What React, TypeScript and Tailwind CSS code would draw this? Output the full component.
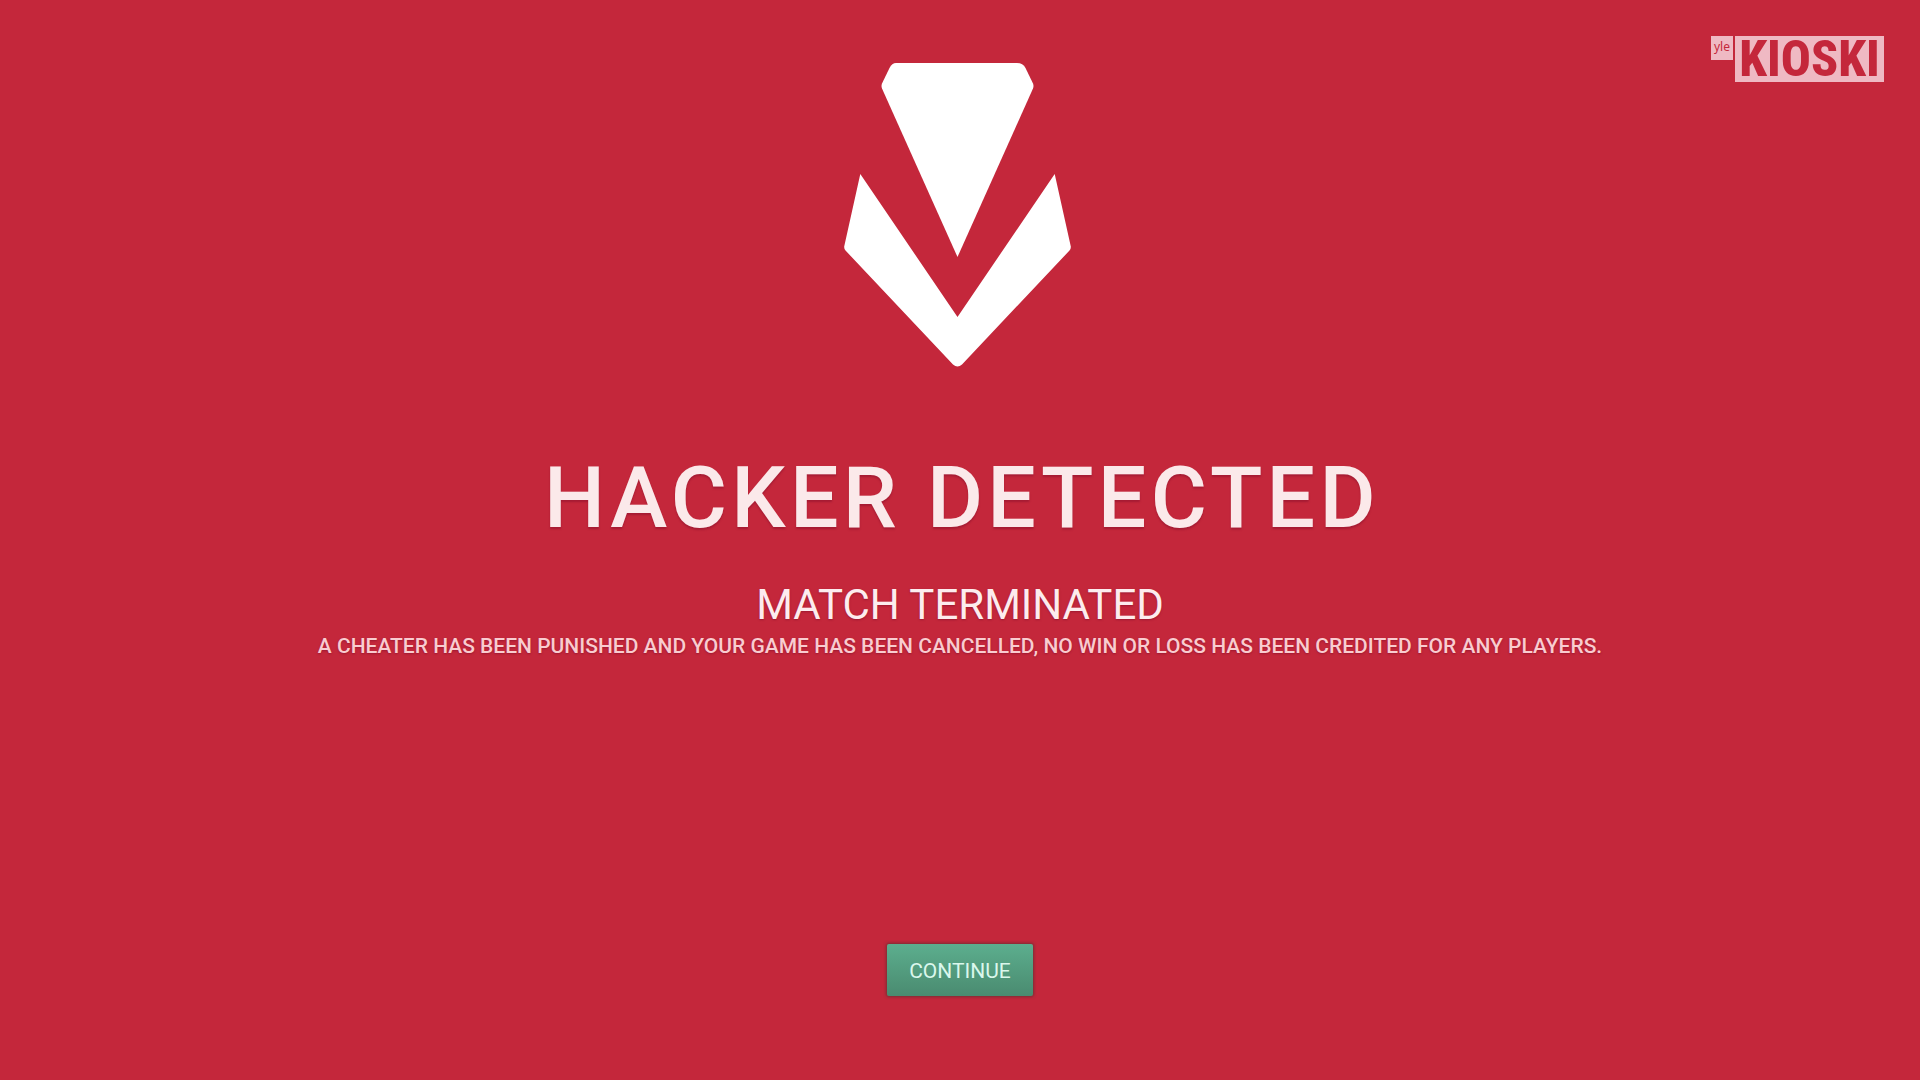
function VanguardLogo() {
  return (
    <svg
      viewBox="0 0 233 306"
      fill="currentColor"
      aria-hidden="true"
      className="w-[233px] h-[306px] shrink-0 text-white"
    >
      <path d="M52 1H173Q179 1 181.500 6L189 21.500Q190 24 189 26.500L113.500 195L38 26.500Q37 24 38 21.500L45.500 6Q48 1 52 1Z" />
      <path d="M16.300 112L113.500 255L210.700 112L226.800 184.500Q227 187 225.500 188.500L118 302.500Q113.500 306.500 109 302.500L1.500 188.500Q0 187 .2 184.500Z" />
    </svg>
  );
}

function KioskiBadge() {
  return (
    <div className="absolute top-9 right-9 flex items-start gap-0.5 text-[#c4273b] normal-case">
      <span className="w-[22px] h-6 bg-[#efb9c3] text-center font-['Noto_Sans',sans-serif] text-xs leading-[22px]">
        yle
      </span>
      <span className="w-[149px] h-[46px] flex items-center justify-center bg-[#efb9c3] font-['Roboto_Condensed','Roboto',sans-serif] font-extrabold text-[50px] leading-[48px]">
        KIOSKI
      </span>
    </div>
  );
}

export default function App() {
  return (
    <div className="relative min-h-screen flex flex-col items-center bg-[#c4273b] pt-[62px] pb-[84px] font-['Roboto',sans-serif] text-center uppercase">
      <KioskiBadge />

      <VanguardLogo />

      <main className="mt-[86px] px-6">
        <h1 className="pl-1 text-[86px] leading-[88px] font-medium tracking-wider text-[#fbe9ea] [text-shadow:0_2px_2px_rgba(120,10,40,0.4)]">
          Hacker Detected
        </h1>

        <h2 className="mt-9 text-[42px] leading-[54px] text-[#fdecee] [text-shadow:0_1px_2px_rgba(120,10,40,0.5)]">
          Match Terminated
        </h2>

        <p className="text-[21px] leading-7 font-medium text-[#f9ccd0] [text-shadow:0_1px_2px_rgba(120,10,40,0.5)]">
          A cheater has been punished and your game has been cancelled, no win
          or loss has been credited for any players.
        </p>
      </main>

      <button
        type="button"
        className="mt-auto h-[52px] px-[22px] pt-0.5 rounded-xs bg-linear-to-b from-[#5cae8e] to-[#4a8b70] text-[21px] leading-7 uppercase text-[#daf7ec] shadow-[0_0_3px_1px_rgba(90,50,50,0.7)] hover:from-[#69bb9b] transition"
      >
        Continue
      </button>
    </div>
  );
}
